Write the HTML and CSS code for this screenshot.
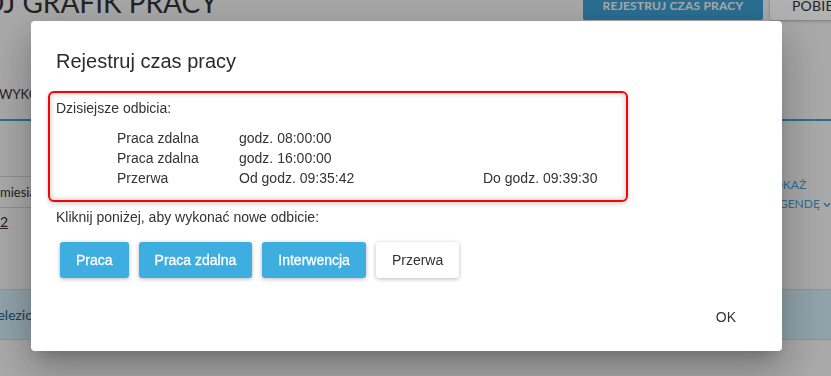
FILE: index.html
```html
<!DOCTYPE html>
<html lang="pl">
<head>
<meta charset="utf-8">
<title>Mój grafik pracy</title>
<link rel="stylesheet" href="styles.css">
</head>
<body>
<div class="page">
  <header class="page-head">
    <h1 class="page-title">MÓJ GRAFIK PRACY</h1>
    <div class="head-actions">
      <button class="head-btn head-btn-primary">REJESTRUJ CZAS PRACY</button>
      <button class="head-btn head-btn-default">POBIERZ</button>
    </div>
  </header>
  <nav class="tabs"><span class="tab">WYKONANE</span></nav>
  <section class="schedule">
    <div class="schedule-table">
      <div class="schedule-head"><span class="cell">miesiąc</span></div>
      <div class="schedule-row"><a class="day-link">2</a></div>
    </div>
    <a class="legend-toggle">POKAŻ LEGENDĘ<svg class="chev" width="8" height="6" viewBox="0 0 8 6"><path d="M1 1.2 L4 4.2 L7 1.2" fill="none" stroke="currentColor" stroke-width="1.6"/></svg></a>
  </section>
  <div class="info-band"><span class="info-text">Wyselezionowano dzień</span></div>
</div>

<div class="backdrop"></div>

<div class="modal-wrap">
  <div class="modal">
    <div class="modal-header">
      <h2 class="modal-title">Rejestruj czas pracy</h2>
    </div>
    <div class="modal-body">
      <div class="punch-box">
        <div class="punch-label">Dzisiejsze odbicia:</div>
        <div class="punch-list">
          <div class="punch-row"><span>Praca zdalna</span><span>godz. 08:00:00</span><span></span></div>
          <div class="punch-row"><span>Praca zdalna</span><span>godz. 16:00:00</span><span></span></div>
          <div class="punch-row"><span>Przerwa</span><span>Od godz. 09:35:42</span><span>Do godz. 09:39:30</span></div>
        </div>
      </div>
      <div class="hint">Kliknij poniżej, aby wykonać nowe odbicie:</div>
      <div class="actions">
        <button class="btn btn-blue">Praca</button>
        <button class="btn btn-blue">Praca zdalna</button>
        <button class="btn btn-blue">Interwencja</button>
        <button class="btn btn-white">Przerwa</button>
      </div>
    </div>
    <div class="modal-footer">
      <button class="btn-flat">OK</button>
    </div>
  </div>
</div>
</body>
</html>
```
FILE: styles.css
```css
html, body {
  margin: 0;
  padding: 0;
}
body {
  width: 831px;
  height: 376px;
  overflow: hidden;
  background: #f2f2f2;
  font-family: Lato, "Liberation Sans", sans-serif;
  color: #3a3a3a;
}

/* background page */
.page {
  width: 900px;
  padding-right: 20px;
  box-sizing: border-box;
}
.page-head {
  display: flex;
  margin-top: -16px;
  height: 36px;
}
.page-title {
  flex: 1;
  margin: 0 0 0 -44px;
  font-size: 28px;
  line-height: 36px;
  font-weight: 400;
  color: #333;
  white-space: nowrap;
}
.head-actions {
  display: flex;
  gap: 7px;
  align-self: flex-start;
  margin-top: 6px;
}
.head-btn {
  height: 30px;
  border: 0;
  border-radius: 2px;
  font-family: Lato, sans-serif;
  font-size: 12px;
  font-weight: 700;
  letter-spacing: 0.2px;
  padding: 0;
}
.head-btn-primary {
  width: 180px;
  background: #3c9fd2;
  color: #f4f4f4;
}
.head-btn-default {
  width: 110px;
  background: #fff;
  color: #333;
  text-align: left;
  padding-left: 22px;
  font-weight: 400;
  font-size: 14px;
  box-shadow: 0 1px 3px rgba(0,0,0,.3);
}
.tabs {
  margin-top: 49px;
  height: 50px;
  display: flex;
  align-items: center;
  border-bottom: 2px solid #3c9fd6;
}
.tab {
  margin-left: -1px;
  font-size: 13px;
  color: #333;
}
.schedule {
  display: flex;
  align-items: flex-start;
  margin-top: 55px;
  height: 113px;
}
.schedule-table {
  flex: 1;
}
.schedule-head {
  height: 30px;
  display: flex;
  align-items: center;
  border-top: 1px solid #cfcfcf;
  border-bottom: 1px solid #cfcfcf;
  font-size: 13px;
  color: #333;
}
.schedule-row {
  padding-top: 5px;
  font-size: 14px;
}
.day-link {
  text-decoration: underline;
  color: #333;
}
.legend-toggle {
  width: 72px;
  margin: -1px 42px 0 0;
  font-size: 12px;
  line-height: 19px;
  color: #3c9fd6;
}
.chev {
  vertical-align: middle;
  margin-left: 3px;
}
.info-band {
  height: 49px;
  display: flex;
  align-items: center;
  background: #cfe9f4;
  border: 1px solid #b3dcec;
  border-left: 0;
  border-right: 0;
}
.info-text {
  margin-left: -30px;
  font-size: 14px;
  color: #2c5d78;
  white-space: nowrap;
}

/* overlay */
.backdrop {
  position: fixed;
  inset: 0;
  background: rgba(0, 0, 0, 0.3);
}
.modal-wrap {
  position: fixed;
  inset: 0;
  display: flex;
  align-items: flex-start;
}
.modal {
  width: 751px;
  margin: 21px 0 0 31px;
  background: #fff;
  border-radius: 4px;
  box-shadow: 0 11px 15px -7px rgba(0,0,0,.2), 0 24px 38px 3px rgba(0,0,0,.14), 0 9px 46px 8px rgba(0,0,0,.12);
  font-family: "Liberation Sans", Arial, sans-serif;
  color: #333;
}
.modal-header {
  padding: 24px 25px 0;
}
.modal-title {
  margin: 0;
  font-size: 20px;
  line-height: 32px;
  font-weight: 400;
  color: #2b2b2b;
}
.modal-body {
  padding: 14px 25px 0;
  font-size: 14px;
  line-height: 20px;
}
.punch-box {
  margin-left: -8px;
  width: 580px;
  box-sizing: border-box;
  border: 2px solid #ff0000;
  border-radius: 6px;
  padding: 5px 6px 12px;
  box-shadow: inset 0 0 6px rgba(0,0,0,.22), 0 2px 5px rgba(0,0,0,.18);
}
.punch-list {
  margin: 10px 0 0 61px;
}
.punch-row {
  display: grid;
  grid-template-columns: 122px 244px auto;
}
.hint {
  margin-top: 5px;
}
.actions {
  display: flex;
  gap: 10px;
  margin: 15px 0 0 4px;
}
.btn {
  height: 36px;
  padding: 0 16px;
  border: 0;
  border-radius: 3px;
  font-family: "Liberation Sans", Arial, sans-serif;
  font-size: 14px;
  box-shadow: 0 1px 4px rgba(0,0,0,.28);
}
.btn-blue {
  background: #3eaee0;
  color: #fff;
  -webkit-text-stroke: 0.3px #fff;
}
.btn-white {
  background: #fff;
  color: #333;
}
.modal-footer {
  display: flex;
  justify-content: flex-end;
  padding: 21px 30px 16px;
}
.btn-flat {
  height: 36px;
  padding: 0 16px;
  border: 0;
  background: transparent;
  font-family: "Liberation Sans", Arial, sans-serif;
  font-size: 14px;
  color: #333;
}
```
